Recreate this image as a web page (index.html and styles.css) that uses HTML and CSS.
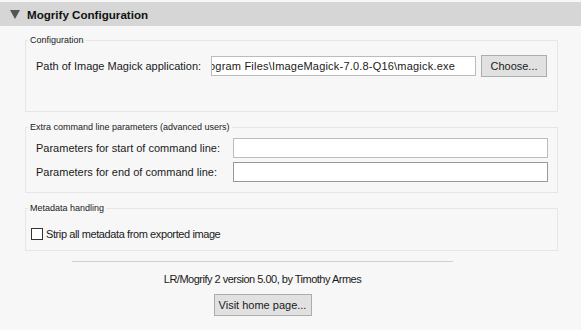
FILE: index.html
```html
<!DOCTYPE html>
<html lang="en">
<head>
  <meta charset="UTF-8">
  <title>Mogrify Configuration</title>
  <link rel="stylesheet" href="styles.css">
</head>
<body>
  <header class="panel-header">
    <span class="disclosure"></span>
    <h1>Mogrify Configuration</h1>
  </header>
  <main class="panel-body">
    <!-- Configuration -->
    <fieldset class="group group-config">
      <legend>Configuration</legend>
      <div class="path-row">
        <label>Path of Image Magick application:</label>
        <div class="text-field path-field"><span>C:\Program Files\ImageMagick-7.0.8-Q16\magick.exe</span></div>
        <button type="button" class="choose-button">Choose...</button>
      </div>
    </fieldset>

    <!-- Extra parameters -->
    <fieldset class="group group-params">
      <legend>Extra command line parameters (advanced users)</legend>
      <div class="param-grid">
        <label>Parameters for start of command line:</label>
        <div class="text-field"></div>
        <label>Parameters for end of command line:</label>
        <div class="text-field focused"></div>
      </div>
    </fieldset>

    <!-- Metadata -->
    <fieldset class="group group-meta">
      <legend>Metadata handling</legend>
      <label class="check-row"><span class="checkbox"></span>Strip all metadata from exported image</label>
    </fieldset>

    <div class="footer">
      <hr class="separator">
      <p class="credits">LR/Mogrify 2 version 5.00, by Timothy Armes</p>
      <button type="button" class="home-button">Visit home page...</button>
    </div>
  </main>
</body>
</html>
```

FILE: styles.css
```css
body {
  margin: 0;
  background: #f7f7f7;
  color: #1a1a1a;
  font-family: "Liberation Sans", Arial, sans-serif;
  font-size: 11px;
}
.panel-header {
  margin-top: 2px;
  height: 24px;
  background: #d6d6d6;
  display: flex;
  align-items: center;
  padding-left: 10px;
}
.disclosure {
  width: 0;
  height: 0;
  border-left: 5px solid transparent;
  border-right: 5px solid transparent;
  border-top: 9px solid #555;
  margin-right: 7px;
}
.panel-header h1 {
  margin: 0;
  font-size: 11.6px;
  font-weight: bold;
  color: #111;
}
.panel-body {
  padding: 9px 23px 0 25px;
  display: flex;
  flex-direction: column;
}
.group {
  margin: 0;
  padding: 0 9px 0 10px;
  border: 1px solid #e6e6e6;
  min-width: 0;
}
.group legend {
  padding: 0 2px;
  margin-left: -8px;
  font-size: 9px;
  color: #1a1a1a;
}
.group + .group {
  margin-top: 10px;
}
.group-config {
  height: 75px;
}
.path-row {
  display: grid;
  grid-template-columns: 170px 265px 66px;
  column-gap: 5px;
  align-items: center;
  margin-top: 10px;
}
.text-field {
  background: #fff;
  border: 1px solid #bcbcbc;
  box-sizing: border-box;
  height: 20px;
}
.text-field.focused {
  border-color: #999;
}
.path-field {
  display: flex;
  justify-content: flex-end;
  align-items: center;
  overflow: hidden;
  white-space: nowrap;
  padding-right: 20px;
  letter-spacing: 0.2px;
}
button {
  font: inherit;
  color: #1a1a1a;
  background: #e1e1e1;
  border: 1px solid #adadad;
  border-radius: 0;
  height: 22px;
  padding: 0;
}
.choose-button {
  width: 66px;
}
.group-params {
  height: 69px;
}
.param-grid {
  display: grid;
  grid-template-columns: 187px 1fr;
  column-gap: 10px;
  row-gap: 4px;
  align-items: center;
  margin-top: 6px;
}
.group-meta {
  height: 46px;
}
.check-row {
  display: flex;
  align-items: center;
  margin-top: 15px;
  margin-left: -5px;
  letter-spacing: -0.4px;
}
.checkbox {
  width: 10px;
  height: 10px;
  border: 1px solid #333;
  background: #fff;
  margin-right: 3px;
}
.footer {
  margin-right: 58px;
  display: flex;
  flex-direction: column;
  align-items: center;
}
.separator {
  width: 381px;
  margin: 10px 0 0;
  border: 0;
  border-top: 1px solid #d0d0d0;
}
.credits {
  margin: 11px 0 0;
  text-align: center;
  letter-spacing: -0.5px;
}
.home-button {
  margin-top: 9px;
  width: 98px;
}
```
